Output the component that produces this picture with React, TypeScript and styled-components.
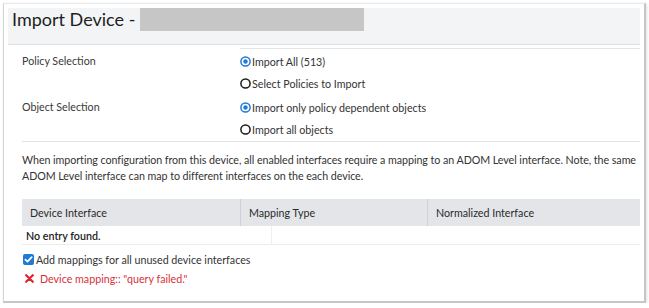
import * as React from "react"
import styled, { createGlobalStyle } from "styled-components"

const GlobalStyle = createGlobalStyle`
  html, body {
    margin: 0;
    padding: 0;
    background: #ffffff;
  }
  body {
    font-family: Lato, "Liberation Sans", Arial, sans-serif;
    color: #333;
  }
`

interface RadioProps {
  checked?: boolean
  label: string
}

const Radio: React.FC<RadioProps> = ({ checked, label }) => (
  <Option>
    <svg width="11" height="11" viewBox="0 0 11 11">
      <circle
        cx="5.5"
        cy="5.5"
        r="4.6"
        fill="none"
        stroke={checked ? "#1f7ad6" : "#1a1a1a"}
        strokeWidth="1.5"
      />
      {checked && <circle cx="5.5" cy="5.5" r="2.2" fill="#1f7ad6" />}
    </svg>
    <span>{label}</span>
  </Option>
)

const App: React.FC = () => {
  return (
    <>
      <GlobalStyle />
      <Frame>
        <Header>
          <TitleRow>
            <Title>Import Device -</Title>
            <Redacted />
          </TitleRow>
        </Header>
        <Body>
          <FormGrid>
            <TopLine />
            <Label>Policy Selection</Label>
            <Options>
              <Radio checked label="Import All (513)" />
              <Radio label="Select Policies to Import" />
            </Options>
            <Label>Object Selection</Label>
            <Options>
              <Radio checked label="Import only policy dependent objects" />
              <Radio label="Import all objects" />
            </Options>
          </FormGrid>
          <Divider />
          <Note>
            When importing configuration from this device, all enabled
            interfaces require a mapping to an ADOM Level interface. Note, the
            same ADOM Level interface can map to different interfaces on the
            each device.
          </Note>
          <Table>
            <HeadRow>
              <HeadCell width={219}>Device Interface</HeadCell>
              <HeadCell width={187}>Mapping Type</HeadCell>
              <HeadCell width={212} last>
                Normalized Interface
              </HeadCell>
            </HeadRow>
            <BodyRow>
              <EmptyCell>No entry found.</EmptyCell>
              <FillerCell />
            </BodyRow>
          </Table>
          <CheckRow>
            <svg width="11" height="11" viewBox="0 0 11 11">
              <rect x="0" y="0" width="11" height="11" rx="2" fill="#1f7ad6" />
              <path
                d="M2.4 5.6 L4.5 7.7 L8.7 3.2"
                fill="none"
                stroke="#fff"
                strokeWidth="1.7"
                strokeLinecap="round"
                strokeLinejoin="round"
              />
            </svg>
            <span>Add mappings for all unused device interfaces</span>
          </CheckRow>
          <ErrorRow>
            <svg width="9" height="9" viewBox="0 0 9 9">
              <path
                d="M1.2 1.2 L7.8 7.8 M7.8 1.2 L1.2 7.8"
                stroke="#e2222c"
                strokeWidth="2.2"
                strokeLinecap="round"
              />
            </svg>
            <span>Device mapping:: "query failed."</span>
          </ErrorRow>
        </Body>
      </Frame>
    </>
  )
}

export default App

// Styles
const Frame = styled.div`
  box-sizing: border-box;
  margin: 3px 0 0 3px;
  width: 643px;
  height: 300px;
  padding: 4px 4px 0 4px;
  border-top: 1px solid #e8e8e8;
  border-left: 1px solid #d4d4d4;
  border-right: 2px solid #c6c6c6;
  border-bottom: 2px solid #c6c6c6;
  box-shadow: 1px 1px 3px rgba(0, 0, 0, 0.12);
  background: #fff;
`

const Header = styled.div`
  height: 36px;
  background: #f3f4f6;
  border-bottom: 1px solid #dfe0e2;
  padding-left: 4px;
`

const TitleRow = styled.div`
  display: flex;
  align-items: center;
  height: 23px;
`

const Title = styled.span`
  font-size: 18px;
  line-height: 23px;
  color: #1e1e1e;
  white-space: nowrap;
`

const Redacted = styled.div`
  width: 224px;
  height: 23px;
  margin-left: 5px;
  background: #c6c6c6;
`

const Body = styled.div`
  padding: 3px 0 0 14px;
  font-size: 10.7px;
`

const FormGrid = styled.div`
  position: relative;
  display: grid;
  grid-template-columns: 218px 1fr;
  row-gap: 2px;
  padding-top: 2px;
`

const TopLine = styled.div`
  position: absolute;
  top: 0;
  left: 218px;
  right: 0;
  border-top: 1px solid #e4e4e4;
`

const Label = styled.div`
  line-height: 22px;
  color: #3a3a3a;
`

const Options = styled.div`
  display: flex;
  flex-direction: column;
`

const Option = styled.div`
  display: flex;
  align-items: center;
  gap: 1px;
  height: 22px;
  color: #333;

  svg {
    flex: none;
  }
`

const Divider = styled.div`
  margin-top: 1px;
  border-top: 1px solid #e3e3e3;
`

const Note = styled.p`
  margin: 10px 0 0;
  line-height: 16px;
  letter-spacing: -0.05px;
  color: #333;
`

const Table = styled.div`
  margin-top: 15px;
`

const HeadRow = styled.div`
  display: flex;
  height: 27px;
  background: #e3e5e8;
`

const HeadCell = styled.div<{ width: number; last?: boolean }>`
  box-sizing: border-box;
  width: ${(p) => p.width}px;
  padding-left: 8px;
  display: flex;
  align-items: center;
  color: #2a2a2a;
  border-right: ${(p) => (p.last ? "none" : "1px solid #cfd1d4")};
`

const BodyRow = styled.div`
  display: flex;
  height: 18px;
  border-bottom: 1px solid #ececec;
`

const EmptyCell = styled.div`
  box-sizing: border-box;
  width: 250px;
  padding-left: 4px;
  display: flex;
  align-items: center;
  color: #222;
  font-weight: 600;
  border-right: 1px solid #efefef;
`

const FillerCell = styled.div`
  flex: 1;
`

const CheckRow = styled.div`
  display: flex;
  align-items: center;
  gap: 2px;
  height: 20px;
  margin-top: 4px;
  padding-left: 1px;
  color: #333;
`

const ErrorRow = styled.div`
  display: flex;
  align-items: center;
  gap: 6px;
  height: 18px;
  padding-left: 3px;
  color: #d8313a;
`
